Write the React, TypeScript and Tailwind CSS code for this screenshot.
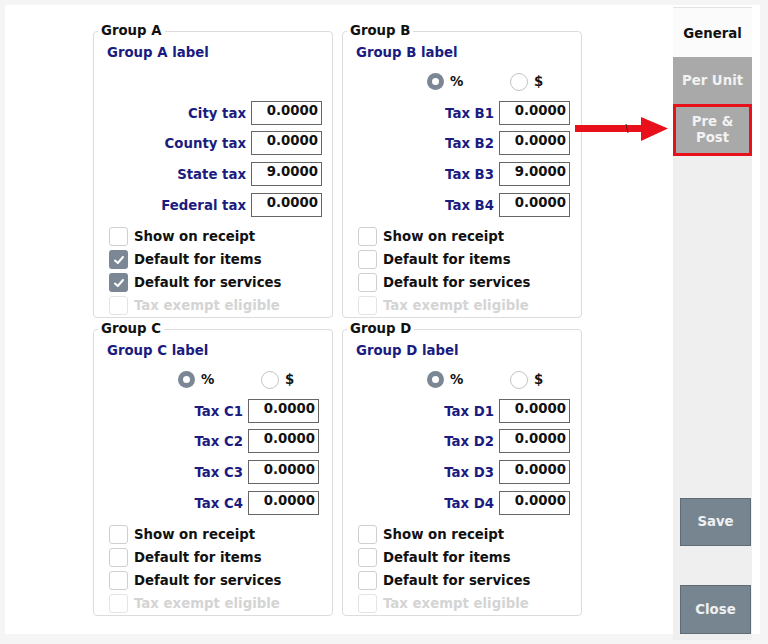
import React from 'react';

type Group = {
  name: string;
  fields: { label: string; value: string }[];
  radios: boolean;
  checks: [boolean, boolean, boolean];
  padRight: string;
};

const groups: Group[] = [
  {
    name: 'A',
    fields: [
      { label: 'City tax', value: '0.0000' },
      { label: 'County tax', value: '0.0000' },
      { label: 'State tax', value: '9.0000' },
      { label: 'Federal tax', value: '0.0000' },
    ],
    radios: false,
    checks: [false, true, true],
    padRight: 'pr-[10px]',
  },
  {
    name: 'B',
    fields: [
      { label: 'Tax B1', value: '0.0000' },
      { label: 'Tax B2', value: '0.0000' },
      { label: 'Tax B3', value: '9.0000' },
      { label: 'Tax B4', value: '0.0000' },
    ],
    radios: true,
    checks: [false, false, false],
    padRight: 'pr-[11px]',
  },
  {
    name: 'C',
    fields: [
      { label: 'Tax C1', value: '0.0000' },
      { label: 'Tax C2', value: '0.0000' },
      { label: 'Tax C3', value: '0.0000' },
      { label: 'Tax C4', value: '0.0000' },
    ],
    radios: true,
    checks: [false, false, false],
    padRight: 'pr-[13px]',
  },
  {
    name: 'D',
    fields: [
      { label: 'Tax D1', value: '0.0000' },
      { label: 'Tax D2', value: '0.0000' },
      { label: 'Tax D3', value: '0.0000' },
      { label: 'Tax D4', value: '0.0000' },
    ],
    radios: true,
    checks: [false, false, false],
    padRight: 'pr-[11px]',
  },
];

const Checkbox = ({ checked, disabled, label }: { checked?: boolean; disabled?: boolean; label: string }) => (
  <div className="flex items-center h-[23px]">
    {checked ? (
      <div className="w-[19px] h-[19px] rounded-[3px] bg-[#7b8794] flex items-center justify-center">
        <svg width="12" height="12" viewBox="0 0 12 12">
          <path d="M2 6.5 L4.8 9 L10 3" fill="none" stroke="#ffffff" strokeWidth="2" strokeLinecap="round" strokeLinejoin="round" />
        </svg>
      </div>
    ) : (
      <div className={`w-[19px] h-[19px] rounded-[3px] border ${disabled ? 'border-[#e4e4e4]' : 'border-[#cfcfcf]'} bg-white`} />
    )}
    <span className={`ml-[6px] ${disabled ? 'text-[#d4d4d4]' : 'text-[#111]'}`}>{label}</span>
  </div>
);

const Radio = ({ on, label }: { on?: boolean; label: string }) => (
  <div className="flex items-center">
    {on ? (
      <div className="w-[17px] h-[17px] rounded-full bg-[#7b8794] flex items-center justify-center">
        <div className="w-[7px] h-[7px] rounded-full bg-white" />
      </div>
    ) : (
      <div className="w-[18px] h-[18px] rounded-full border border-[#c4c4c4] bg-white" />
    )}
    <span className="ml-[6px] text-[#111]">{label}</span>
  </div>
);

const GroupBox = ({ g }: { g: Group }) => (
  <fieldset className="border border-[#dcdcdc] rounded-[4px] h-[295px] flex flex-col overflow-visible">
    <legend className="ml-[4px] px-[3px] text-[#111] leading-[16px]">Group {g.name}</legend>
    <div className="pl-[13px] mt-[6px] text-[#1b1b80] leading-[16px]">Group {g.name} label</div>
    <div className="h-[32px] mt-[7px] flex items-center pl-[84px]">
      {g.radios && (
        <>
          <div className="w-[83px]">
            <Radio on label="%" />
          </div>
          <Radio label="$" />
        </>
      )}
    </div>
    <div className={`flex flex-col gap-[7.6px] mt-[6px] ${g.padRight}`}>
      {g.fields.map((f) => (
        <div key={f.label} className="flex items-center justify-end h-[23px]">
          <span className="text-[#1b1b80] mr-[5px] mt-[2px]">{f.label}</span>
          <div className="w-[71px] h-[24px] border border-[#666] bg-white flex justify-end pr-[3px] pt-[1px] leading-[16px] text-[#111]">
            {f.value}
          </div>
        </div>
      ))}
    </div>
    <div className="flex flex-col pl-[15px] mt-[9px]">
      <Checkbox checked={g.checks[0]} label="Show on receipt" />
      <Checkbox checked={g.checks[1]} label="Default for items" />
      <Checkbox checked={g.checks[2]} label="Default for services" />
      <Checkbox disabled label="Tax exempt eligible" />
    </div>
  </fieldset>
);

export default function App() {
  return (
    <div
      className="w-[768px] h-[644px] bg-[#f5f5f5] pt-[5px] pl-[5px] pr-[8px] pb-[10px] font-bold text-[13.3px]"
      style={{ fontFamily: '"DejaVu Sans", Verdana, sans-serif' }}
    >
      <div className="relative bg-white h-full flex">
        <div className="ml-[88px] mt-[18px] grid grid-cols-[240px_240px] grid-rows-[298px_298px] gap-x-[9px] h-[596px]">
          {groups.map((g) => (
            <GroupBox key={g.name} g={g} />
          ))}
        </div>

        {/* side tabs */}
        <div className="ml-auto mr-[8px] mt-[2px] w-[79px] h-[633px] bg-[#efefef] border-t border-[#e2e2e2] flex flex-col">
          <div className="h-[49px] bg-[#fbfbfb] flex items-center justify-center text-[#111] pt-[2px]">General</div>
          <div className="h-[47px] bg-[#a9a9a9] flex items-center justify-center text-[#f2f2f2]">Per Unit</div>
          <div className="h-[52px] bg-[#a9a9a9] border-[3px] border-[#e8101a] flex flex-col items-center justify-center text-[#f2f2f2] leading-[16px]">
            <span>Pre &amp;</span>
            <span>Post</span>
          </div>
          <div className="flex-1 flex flex-col items-end pr-[1px]">
            <button className="mt-[342px] w-[71px] h-[48px] bg-[#76858f] border border-[#5f6c76] text-[#eef0f2] font-bold">
              Save
            </button>
            <button className="mt-[39px] w-[71px] h-[49px] bg-[#76858f] border border-[#5f6c76] text-[#eef0f2] font-bold">
              Close
            </button>
          </div>
        </div>

        {/* annotation arrow */}
        <svg className="absolute left-[570px] top-[111px]" width="95" height="28" viewBox="0 0 95 28">
          <rect x="0" y="9" width="68" height="7" fill="#e8101a" />
          <polygon points="66,1 93,12.5 66,25" fill="#e8101a" />
          <line x1="51" y1="8" x2="53" y2="17" stroke="#5a1a1a" strokeWidth="1" />
        </svg>
      </div>
    </div>
  );
}
